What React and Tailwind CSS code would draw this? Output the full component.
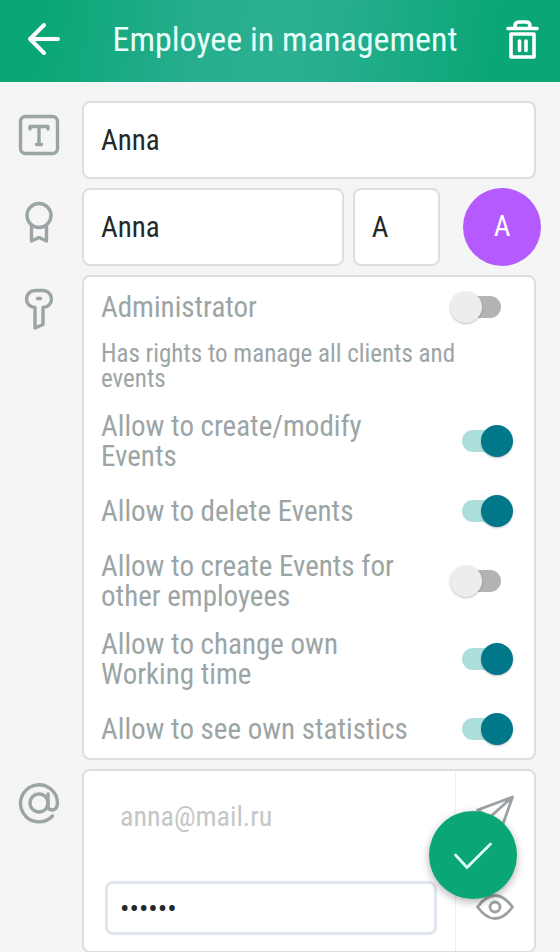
import React, { useState } from 'react';

const permissions = [
  { id: 'modify', name: 'Allow to create/modify Events', active: true },
  { id: 'delete', name: 'Allow to delete Events', active: true },
  { id: 'others', name: 'Allow to create Events for other employees', active: false },
  { id: 'time', name: 'Allow to change own Working time', active: true },
  { id: 'stats', name: 'Allow to see own statistics', active: true },
];

const fieldClass =
  'block h-[78px] w-full min-w-0 rounded-lg border-2 border-[#dedede] bg-white px-[17px] text-[29px] text-[#23292b] focus:outline-none focus:border-[#0aa675]';

function Icon({ children, className }) {
  return (
    <svg
      viewBox="0 0 42 42"
      fill="none"
      stroke="currentColor"
      strokeWidth="3.4"
      strokeLinecap="round"
      strokeLinejoin="round"
      className={className}
      aria-hidden="true"
    >
      {children}
    </svg>
  );
}

function Section({ icon, children }) {
  return (
    <section className="flex">
      <div className="flex w-[82px] shrink-0 items-start pl-[18px] pt-[13px] text-[#9ca5a5]">{icon}</div>
      <div className="min-w-0 flex-1">{children}</div>
    </section>
  );
}

function Switch({ id, checked, onChange }) {
  return (
    <input
      id={id}
      type="checkbox"
      role="switch"
      checked={checked}
      onChange={onChange}
      className="relative h-8 w-[63px] shrink-0 cursor-pointer appearance-none before:absolute before:left-3 before:top-[5px] before:h-[22px] before:w-[39px] before:rounded-full before:bg-[#b3b3b3] after:absolute after:left-0 after:top-0 after:size-8 after:rounded-full after:bg-[#ededed] after:shadow-[0_1px_2px_rgba(0,0,0,0.25)] checked:before:bg-[#acdedb] checked:after:left-[31px] checked:after:bg-[#00788a]"
    />
  );
}

function PermissionRow({ id, name, checked, onChange }) {
  return (
    <div className="flex min-h-11 items-center justify-between">
      <label htmlFor={id} className="max-w-[320px]">
        {name}
      </label>
      <Switch id={id} checked={checked} onChange={onChange} />
    </div>
  );
}

export default function App() {
  const [admin, setAdmin] = useState(false);
  const [rights, setRights] = useState(permissions);
  const [showPassword, setShowPassword] = useState(false);

  const toggle = (id) =>
    setRights((prev) => prev.map((item) => (item.id === id ? { ...item, active: !item.active } : item)));

  return (
    <div className="min-h-screen bg-[#f5f5f5] font-['Roboto_Condensed',Roboto,sans-serif]">
      <header className="flex h-[82px] items-center justify-between bg-[linear-gradient(100deg,#0aa675_8%,#26ae8e_35%,#2cb092_50%,#26ae8e_60%,#0aa675_88%)] pl-[22px] pr-4 text-white">
        <button type="button" aria-label="Back" className="pb-1">
          <Icon className="size-[42px]">
            <path d="M36 21H8M22 7 8 21l14 14" strokeWidth="4" />
          </Icon>
        </button>
        <h1 className="pb-1 pl-1 text-[34px] text-[#e6fffa]">Employee in management</h1>
        <button type="button" aria-label="Delete" className="pb-1">
          <Icon className="size-[42px]">
            <path d="M6 10.500h29M13 10V8q0-4 4-4h7q4 0 4 4v2" strokeWidth="3.6" />
            <path d="M9 16h23v23H9zM17.500 23v9.500M24 23v9.500" strokeWidth="3.6" />
          </Icon>
        </button>
      </header>

      <main className="flex flex-col gap-[9px] pr-6 pt-[19px]">
        <Section
          icon={
            <Icon className="size-[42px]">
              <rect x="2.500" y="2.500" width="37" height="37" rx="5" />
              <path d="M12 15v-2.500h18V15M21 13v17M18.500 30.500h5" />
            </Icon>
          }
        >
          <input type="text" aria-label="Full name" defaultValue="Anna" className={fieldClass} />
        </Section>

        <Section
          icon={
            <Icon className="size-[42px]">
              <circle cx="21" cy="14.500" r="12" />
              <path d="M13.500 25v15l7.500-3.500 7.500 3.500V25" />
            </Icon>
          }
        >
          <div className="-mr-[5px] grid grid-cols-[3fr_1fr_auto] items-center gap-[9px]">
            <input type="text" aria-label="Short name" defaultValue="Anna" className={fieldClass} />
            <input type="text" aria-label="Initials" defaultValue="A" className={fieldClass} />
            <button
              type="button"
              aria-label="Colour, A"
              className="ml-[14px] size-[78px] rounded-full bg-[#b45aff] text-[29px] text-white"
            >
              A
            </button>
          </div>
        </Section>

        <Section
          icon={
            <Icon className="size-[42px]">
              <path d="M17 19.500A8.500 8.500 0 0 1 17 2.500h8a8.500 8.500 0 0 1 0 17V36.500L17 40V19.500z" />
              <path d="M19.500 10.500h3" />
            </Icon>
          }
        >
          <div className="rounded-lg border-2 border-[#dedede] bg-white pb-[7px] pl-[17px] pr-[21px] pt-2 text-[29px] leading-[30px] text-[#9ca5a5]">
            <div className="flex min-h-11 items-center justify-between">
              <label htmlFor="admin">Administrator</label>
              <Switch id="admin" checked={admin} onChange={() => setAdmin(!admin)} />
            </div>
            <p className="mb-5 mt-3 text-[25px] leading-[25px]">
              Has rights to manage all clients and events
            </p>
            <div className="flex flex-col gap-[18px]">
              {rights.map((item) => (
                <PermissionRow
                  key={item.id}
                  id={item.id}
                  name={item.name}
                  checked={item.active}
                  onChange={() => toggle(item.id)}
                />
              ))}
            </div>
          </div>
        </Section>

        <Section
          icon={
            <Icon className="size-[42px]">
              <circle cx="21" cy="21" r="9" />
              <path d="M30 12v12.500q0 3.500 4.500 3.500 5-1 5-7A18.500 18.500 0 1 0 34.500 34" />
            </Icon>
          }
        >
          <div className="flex h-[184px] rounded-lg border-2 border-[#dedede] bg-white">
            <div className="flex flex-1 flex-col gap-[38px] border-r border-[#f0f0f0] pl-[21px] pr-[18px] pt-[18px]">
              <input
                type="email"
                aria-label="Email"
                placeholder="anna@mail.ru"
                className="h-[54px] w-full px-[15px] text-[28px] placeholder:text-[#c4c7c7] focus:outline-none"
              />
              <input
                type={showPassword ? 'text' : 'password'}
                aria-label="Password"
                defaultValue="secret"
                className="h-[54px] w-full rounded-lg border-[3px] border-[#dfe6ee] px-3 text-[28px] text-[#23292b] focus:outline-none"
              />
            </div>
            <div className="flex w-[78px] flex-col items-center gap-[50px] pt-[23px] text-[#9ca1a3]">
              <button type="button" aria-label="Send invitation">
                <Icon className="size-[42px]">
                  <path d="M38.500 3 3.500 16l12 7.500L26 38.500zM38.500 3l-23 20.500" strokeWidth="2.800" />
                </Icon>
              </button>
              <button type="button" aria-label="Show password" onClick={() => setShowPassword(!showPassword)}>
                <Icon className="size-[42px]">
                  <path d="M3.500 21Q12 9.500 21 9.500T38.500 21Q30 32.500 21 32.500T3.500 21z" strokeWidth="2.800" />
                  <circle cx="21" cy="21" r="5" strokeWidth="2.800" />
                </Icon>
              </button>
            </div>
          </div>
        </Section>
      </main>

      <button
        type="button"
        aria-label="Save"
        className="fixed bottom-[53px] right-[43px] flex size-[88px] items-center justify-center rounded-full bg-[#0aa675] text-[#dcfff4] shadow-[0_3px_8px_rgba(0,0,0,0.3)]"
      >
        <Icon className="size-[42px]">
          <path d="M3.500 21 15 33.500 38.500 10" strokeWidth="2.800" />
        </Icon>
      </button>
    </div>
  );
}
